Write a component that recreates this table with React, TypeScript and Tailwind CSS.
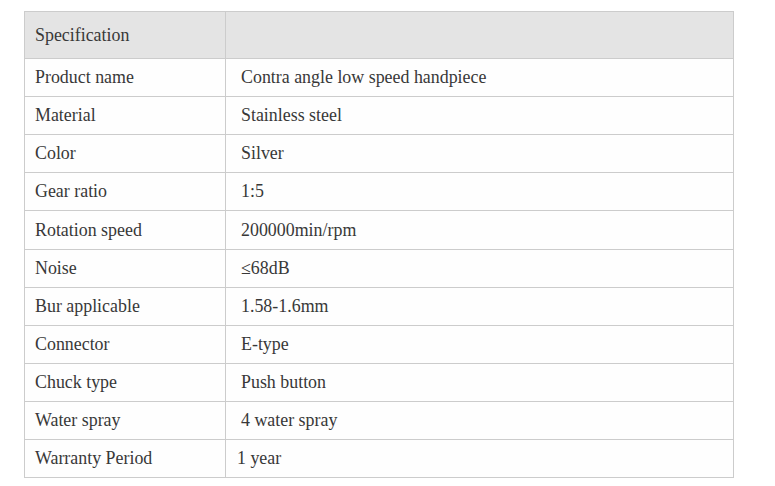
const rows: [string, string, string][] = [
  ['Product name', 'Contra angle low speed handpiece', 'pl-[15px]'],
  ['Material', 'Stainless steel', 'pl-[15px]'],
  ['Color', 'Silver', 'pl-[15px]'],
  ['Gear ratio', '1:5', 'pl-[15px]'],
  ['Rotation speed', '200000min/rpm', 'pl-[15px]'],
  ['Noise', '≤68dB', 'pl-[15px]'],
  ['Bur applicable', '1.58-1.6mm', 'pl-[15px]'],
  ['Connector', 'E-type', 'pl-[15px]'],
  ['Chuck type', 'Push button', 'pl-[15px]'],
  ['Water spray', '4 water spray', 'pl-[15px]'],
  ['Warranty Period', '1 year', 'pl-[11px]'],
]

export default function App() {
  return (
    <div className="min-h-screen bg-white pt-[11px] pl-[24px] font-['Liberation_Serif',serif] text-[17.9px] text-[#383838]">
      <table className="w-[710px] border-collapse border border-[#cccccc]">
        <thead>
          <tr className="h-[47px] bg-[#e4e4e4]">
            <th className="w-[201px] border border-[#cccccc] pl-[10px] text-left font-normal">Specification</th>
            <th className="border border-[#cccccc]"></th>
          </tr>
        </thead>
        <tbody>
          {rows.map(([label, value, pad]) => (
            <tr key={label} className={`${label === 'Rotation speed' ? 'h-[39px]' : 'h-[38px]'} bg-[#fefefe]`}>
              <td className="border border-[#cccccc] pl-[10px]">{label}</td>
              <td className={`border border-[#cccccc] ${pad}`}>{value}</td>
            </tr>
          ))}
        </tbody>
      </table>
    </div>
  )
}
